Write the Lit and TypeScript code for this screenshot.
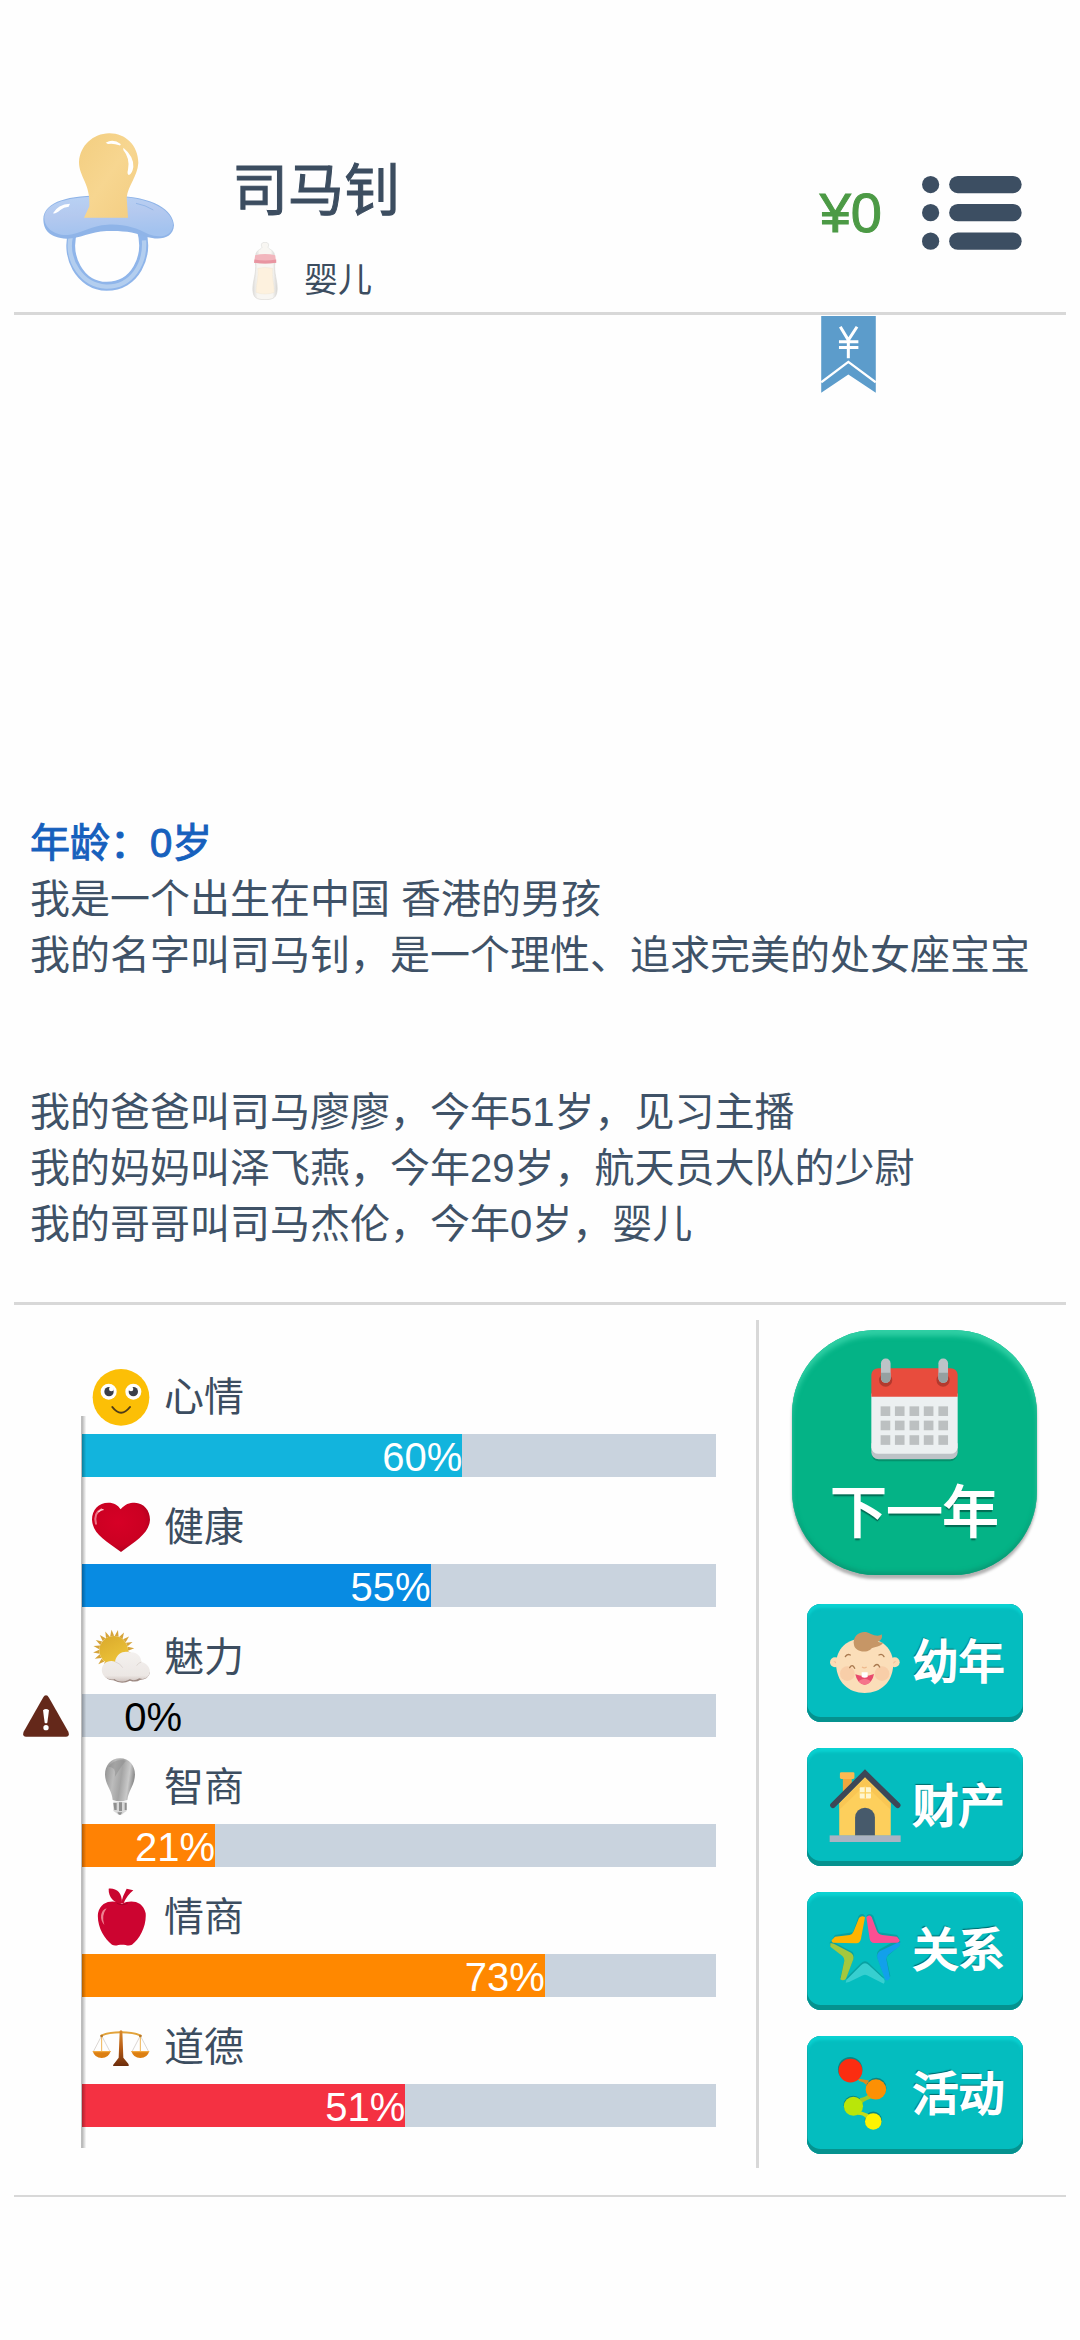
import { LitElement, html, svg, css, type TemplateResult } from "lit";
import { customElement, property } from "lit/decorators.js";
import { classMap } from "lit/directives/class-map.js";
import { styleMap } from "lit/directives/style-map.js";

interface Stat {
  id: string;
  label: string;
  value: number;
  color: string;
  box: string;
  art: unknown;
}

interface Action {
  label: string;
  box: string;
  art: unknown;
}

const pacifier = svg`
  <defs>
    <linearGradient id="shield" x1="0" y1="0" x2="0.2" y2="1">
      <stop offset="0" stop-color="#b9d2f4"></stop>
      <stop offset="0.5" stop-color="#b4c9ef"></stop>
      <stop offset="1" stop-color="#a3c3ef"></stop>
    </linearGradient>
    <linearGradient id="teat" x1="0" y1="0" x2="1" y2="1">
      <stop offset="0" stop-color="#f3ce80"></stop>
      <stop offset="0.5" stop-color="#f7d690"></stop>
      <stop offset="1" stop-color="#f3cd82"></stop>
    </linearGradient>
  </defs>
  <path fill="none" stroke="#8fb5ea" stroke-width="27" d="M222 352C190 440 242 527 320 528C405 528 448 440 424 358"></path>
  <path fill="none" stroke="#b3ceef" stroke-width="13" d="M212 380C198 450 245 525 318 529C395 531 437 460 432 390"></path>
  <path fill="#8fb4e8" d="M130 326C132 280 190 252 325 256C460 254 520 300 522 345C520 385 480 390 440 380C410 366 370 360 320 362C270 364 240 385 200 385C150 382 130 360 130 326Z"></path>
  <path fill="url(#shield)" d="M133 320C138 278 200 258 325 258C455 258 512 300 519 340C519 380 478 384 446 372C410 352 370 340 322 343C275 345 240 370 204 374C160 376 132 350 133 320Z"></path>
  <path fill="none" stroke="#94b7e8" stroke-width="3" d="M408 279Q436 284 460 299"></path>
  <path fill="url(#teat)" d="M327 69C375 68 415 105 415 158C412 200 384 225 380 262L384 322L252 322L268 288C272 220 237 200 237 155C240 105 280 70 327 69Z"></path>
  <path fill="#fff" d="M317 97Q340 84 362 101Q363 106 358 105Q340 98 324 101ZM370 112Q402 138 400 170Q397 190 387 194Q380 191 384 178Q391 145 370 119Z"></path>
  <path fill="#fff" d="M210 280Q173 282 159 309Q168 311 181 299Q191 290 206 289Z"></path>`;

const bottle = svg`
  <defs>
    <linearGradient id="glass" x1="0" x2="1" y1="0" y2="0">
      <stop offset="0" stop-color="#dedddb"></stop>
      <stop offset="0.2" stop-color="#f8f6f2"></stop>
      <stop offset="0.8" stop-color="#f8f6f2"></stop>
      <stop offset="1" stop-color="#d8d7d5"></stop>
    </linearGradient>
  </defs>
  <path fill="url(#glass)" stroke="#deddda" stroke-width="2" d="M764 434C764 416 778 417 783 408C778 398 783 393 792 393C801 393 806 398 801 408C807 417 820 416 821 434Z"></path>
  <path fill="url(#glass)" stroke="#dbd9d6" stroke-width="2" d="M763 455H822C818 485 830 510 829 535C828 560 818 567 792 567C764 567 756 560 755 535C755 510 767 485 763 455Z"></path>
  <path fill="#fdf1de" stroke="#eadfce" stroke-width="1" d="M770 472Q792 466 815 472C812 500 820 515 820 545Q792 555 765 545C765 515 773 500 770 472Z"></path>
  <path fill="#f2b6bd" d="M762 432Q792 425 823 432L826 455Q792 460 759 455Z"></path>
  <path fill="#e895a1" d="M760 445Q792 452 826 445L826 455Q792 460 759 455Z"></path>`;

const menuGlyph = svg`
  ${[131, 216, 302].map(
    (y) => svg`<circle cx="451" cy=${y} r="26"></circle><rect x="507" y=${y - 26} width="219" height="52" rx="26"></rect>`
  )}`;

const warning = svg`
  <path fill="#64281a" d="M138 252Q143 252 147 259L205 361Q210 376 198 376H78Q66 376 71 361L129 259Q133 252 138 252Z"></path>
  <path fill="#fff" d="M129 297Q138 289 147 297L142 334Q138 338 134 334Z"></path>
  <circle cx="138" cy="349" r="8" fill="#fff"></circle>`;

const smile = svg`
  <circle cx="363" cy="323" r="85" fill="#fcbf06"></circle>
  <circle cx="326" cy="306" r="24" fill="#fff"></circle>
  <circle cx="400" cy="306" r="24" fill="#fff"></circle>
  <circle cx="327" cy="306" r="14" fill="#3b3f4a"></circle>
  <circle cx="400" cy="306" r="14" fill="#3b3f4a"></circle>
  <circle cx="334" cy="298" r="7" fill="#fff"></circle>
  <circle cx="393" cy="298" r="7" fill="#fff"></circle>
  <path fill="none" stroke="#4e3b18" stroke-width="6" stroke-linecap="round" d="M337 352Q363 386 390 352"></path>`;

const heart = svg`
  <defs>
    <radialGradient id="heartFill" cx="0.45" cy="0.4" r="0.65">
      <stop offset="0" stop-color="#d60026"></stop>
      <stop offset="0.7" stop-color="#cb0022"></stop>
      <stop offset="1" stop-color="#a8001d"></stop>
    </radialGradient>
  </defs>
  <path fill="url(#heartFill)" d="M362 659C375 643 388 639 404 639C432 640 450 662 450 690C448 730 410 752 363 787C315 752 278 732 276 690C276 660 296 639 325 639C342 639 354 646 362 659Z"></path>
  <path fill="none" stroke="#ee7386" stroke-width="6" stroke-linecap="round" d="M288 702C283 682 288 666 304 659"></path>
  <path fill="none" stroke="#fbd3d8" stroke-width="4" stroke-linecap="round" d="M296 666Q302 660 309 660"></path>`;

const rays = Array.from({ length: 20 }, (_, i) => i * 18 - 6);
const sunCloud = svg`
  <defs>
    <linearGradient id="sunFill" x1="0" y1="0" x2="0.5" y2="1">
      <stop offset="0" stop-color="#d9a92c"></stop>
      <stop offset="1" stop-color="#edc338"></stop>
    </linearGradient>
    <linearGradient id="cloudFill" x1="0" y1="0" x2="0" y2="1">
      <stop offset="0" stop-color="#f4f1ef"></stop>
      <stop offset="0.8" stop-color="#ece7e4"></stop>
      <stop offset="1" stop-color="#cfc3be"></stop>
    </linearGradient>
  </defs>
  ${rays.map((a) => svg`<path fill="#d6a43a" d="M335 75L341 56L347 75Z" transform="rotate(${a} 341 118)"></path>`)}
  <circle cx="341" cy="118" r="43" fill="url(#sunFill)"></circle>
  <path fill="#9d8a83" d="M310 188Q320 208 340 208Q366 222 390 209Q408 215 420 207Q446 206 450 184Z"></path>
  <path fill="url(#cloudFill)" d="M330 205C308 200 300 180 309 163C318 150 334 148 345 152C350 124 374 118 390 124C410 122 424 136 424 153C442 156 454 174 448 190C442 204 430 206 418 202C405 210 395 208 390 204C370 216 350 212 344 204Q337 207 330 205Z"></path>
  <path fill="none" stroke="#ddd6d2" stroke-width="3" d="M345 152Q362 158 368 170M424 153Q414 156 410 164"></path>`;

const bulb = svg`
  <defs>
    <linearGradient id="bulbFill" x1="0" x2="1" y1="0" y2="0.2">
      <stop offset="0" stop-color="#8d8d8d"></stop>
      <stop offset="0.35" stop-color="#bcbcbc"></stop>
      <stop offset="0.6" stop-color="#a4a4a4"></stop>
      <stop offset="0.85" stop-color="#c9c9c9"></stop>
      <stop offset="1" stop-color="#919191"></stop>
    </linearGradient>
  </defs>
  <path fill="url(#bulbFill)" d="M360 445C388 445 405 467 405 494C404 525 386 540 382 570Q360 578 338 570C336 540 316 525 315 494C315 467 332 445 360 445Z"></path>
  <path fill="#8c8c8c" opacity="0.5" d="M325 470Q345 444 378 452Q362 470 345 500Q350 470 325 470Z"></path>
  <path fill="#d8d8d8" d="M340 575H380V603L372 608Q360 622 348 608L340 603Z"></path>
  <path fill="#8f8f8f" d="M340 579H350V600H343ZM357 577H366V603H357ZM374 579H380V600H374ZM352 607H367L362 614H357Z"></path>`;

const apple = svg`
  <path fill="#c90630" d="M366 97C345 99 325 82 326 54C350 52 366 66 366 97Z"></path>
  <path fill="#c90630" d="M363 98Q368 75 380 54L400 59Q380 75 371 98Z"></path>
  <path fill="#cc0430" d="M366 99C390 88 428 88 437 128C440 165 420 205 396 222C385 227 378 222 366 222C354 222 346 227 336 222C312 205 290 165 294 128C303 88 342 88 366 99Z"></path>
  <path fill="#ee8191" d="M320 113C300 118 298 148 313 163Q303 135 320 113Z"></path>
  <path fill="none" stroke="#a50327" stroke-width="3" d="M350 97Q366 107 384 97"></path>`;

const scales = svg`
  <defs>
    <linearGradient id="postFill" x1="0" x2="0" y1="0" y2="1">
      <stop offset="0" stop-color="#d98a2c"></stop>
      <stop offset="0.5" stop-color="#b85d16"></stop>
      <stop offset="1" stop-color="#6b2c0c"></stop>
    </linearGradient>
  </defs>
  <path fill="none" stroke="#c9c3bc" stroke-width="2" d="M304 492L281 536M306 492L329 536M420 492L397 536M422 492L445 536"></path>
  <path fill="none" stroke="#efb454" stroke-width="3" d="M305 492V536M421 492V536"></path>
  <path fill="none" stroke="#e2a33b" stroke-width="6" stroke-linecap="round" d="M304 490Q325 480 363 480Q401 480 422 490"></path>
  <circle cx="305" cy="491" r="4" fill="#b6772a"></circle>
  <circle cx="421" cy="491" r="4" fill="#b6772a"></circle>
  <path fill="url(#postFill)" d="M359 476Q363 472 367 476L370 556L383 572Q387 576 386 581H339Q339 576 344 572L356 556Z"></path>
  <path fill="#dc7f12" d="M278 536H332Q326 557 305 557Q284 557 278 536ZM394 536H448Q442 557 421 557Q400 557 394 536Z"></path>
  <path fill="#f3a93f" d="M278 536H332L331 540H279ZM394 536H448L447 540H395Z"></path>`;

const calendar = svg`
  <path fill="#067a5c" opacity="0.6" d="M396 480H652V494Q650 514 630 514H416Q396 512 396 494Z"></path>
  <path fill="#bdc3c7" d="M394 460H654V488Q652 508 632 508H416Q396 508 394 488Z"></path>
  <path fill="#ecf0f1" d="M394 310H654V472Q652 492 632 492H416Q396 492 394 472Z"></path>
  <path fill="#e84c3d" d="M394 320V254Q396 234 416 234H632Q652 234 654 254V320Z"></path>
  ${[437, 610].map(
    (x) => svg`
      <circle cx=${x} cy="270" r="20" fill="#b33a2e"></circle>
      <rect x=${x - 14} y="205" width="29" height="73" rx="14" fill="#bdc3c7"></rect>
      <path d="M${x - 14} 248H${x + 15}V264A14 14 0 0 1 ${x - 14} 264Z" fill="#95a0a1"></path>`
  )}
  ${[349, 392, 436].map((y) =>
    [422, 465, 509, 552, 596].map((x) => svg`<rect x=${x} y=${y} width="29" height="29" fill="#bcc0c1"></rect>`)
  )}`;

const baby = svg`
  <ellipse cx="251" cy="228" rx="86" ry="80" fill="#1d7f7d" opacity="0.5"></ellipse>
  <circle cx="162" cy="220" r="15" fill="#fadcb5"></circle>
  <circle cx="341" cy="220" r="15" fill="#fadcb5"></circle>
  <path fill="#f3bf98" d="M157 217Q166 214 168 226ZM346 217Q337 214 335 226Z"></path>
  <path fill="#fbdeb9" d="M251 148C305 148 336 180 337 226C335 280 300 312 251 312C202 312 167 280 165 226C166 180 197 148 251 148Z"></path>
  <circle cx="199" cy="254" r="22" fill="#f8c9a4" opacity="0.8"></circle>
  <circle cx="303" cy="254" r="22" fill="#f8c9a4" opacity="0.8"></circle>
  <path fill="#c69666" d="M219 168C212 138 245 120 268 134C282 141 296 142 302 136C306 148 298 156 290 158C304 162 308 160 306 162C294 178 272 172 268 182C250 194 222 186 219 168Z"></path>
  <path fill="none" stroke="#a9794f" stroke-width="4" stroke-linecap="round" d="M193 203Q198 193 208 198M294 198Q304 193 309 203M206 236Q214 223 221 238M279 232Q289 220 296 234"></path>
  <path fill="none" stroke="#eeb98d" stroke-width="4" d="M243 234Q250 239 257 234"></path>
  <path fill="#e8496c" d="M223 256Q251 266 279 255Q274 284 251 287Q228 284 223 256Z"></path>
  <path fill="#fff" d="M242 250H260V264Q251 269 242 264Z"></path>
  <path fill="#f5748b" d="M232 277Q251 262 270 277Q262 287 251 287Q240 287 232 277Z"></path>`;

const house = svg`
  <path fill="#eda73f" d="M185 566H212V600L185 612Z"></path>
  <rect x="176" y="549" width="44" height="20" rx="4" fill="#fbb952"></rect>
  <path fill="#fdcf5c" d="M174 642L252 560L330 642V741H174Z"></path>
  <path fill="#f5bd4c" d="M174 642L252 568L330 642V662L252 588L174 662Z" opacity="0.5"></path>
  <path fill="none" stroke="#3d4757" stroke-width="17" stroke-linecap="round" stroke-linejoin="miter" d="M155 649L252 552L351 649"></path>
  <rect x="236" y="594" width="34" height="34" rx="3" fill="#fff6cf"></rect>
  <path stroke="#fdcf5c" stroke-width="4" d="M253 594V628M236 611H270"></path>
  <path fill="#475a6b" d="M222 741V686A30 30 0 0 1 282 686V741Z"></path>
  <rect x="145" y="740" width="215" height="20" fill="#aab3c2"></rect>`;

const star = svg`
  <g fill="#0b8f8f" opacity="0.6" transform="translate(0 -4)">
    <path d="M154 184L162 171L216 163L233 114Q241 103 251 112L240 180Q238 190 228 192Z"></path>
    <path d="M356 184L348 171L294 163L277 114Q268 103 257 112L268 180Q270 190 280 192Z"></path>
    <path d="M146 194Q152 186 162 194L214 222Q220 228 218 240L196 298Q188 308 178 300L192 240L148 204Z"></path>
    <path d="M358 190Q350 184 340 190L296 214Q286 222 288 236L312 300Q322 308 328 294L316 238L356 202Z"></path>
    <path d="M192 304L240 256Q252 244 264 256L310 300L258 288H246Z"></path>
  </g>
  <path fill="#ffb400" d="M152 183L162 172L206 167Q215 165 218 156L234 116Q242 106 252 114L240 178Q238 190 226 192L156 190Q151 188 152 183Z"></path>
  <path fill="#fb4f92" d="M356 183L348 172L304 167Q292 165 288 156L272 113Q264 104 256 114L266 178Q268 190 280 191L350 190Q356 188 356 183Z"></path>
  <path fill="#a3c83e" d="M148 192Q156 190 164 196L210 220Q220 228 217 240L195 298Q187 306 178 300L190 244Q191 236 184 230L148 202Z"></path>
  <path fill="#12a0ea" d="M358 190Q350 188 342 194L296 216Q286 224 289 236L312 300Q320 308 327 296L316 240Q316 232 322 226L356 200Z"></path>
  <path fill="#37cfd0" d="M194 310Q196 300 204 294L240 258Q252 246 264 258L308 298Q314 306 308 313L258 288Q252 285 246 288L204 308Z"></path>`;

const nodes = svg`
  <g fill="#0a8583">
    <circle cx="207" cy="570" r="37"></circle>
    <circle cx="286" cy="627" r="31"></circle>
    <circle cx="216" cy="679" r="29"></circle>
    <circle cx="277" cy="724" r="26"></circle>
  </g>
  <path fill="#dd8a1c" d="M230 598Q246 601 264 604L256 618Q248 608 234 606Z"></path>
  <path fill="#9fc82a" d="M236 658Q256 654 264 644L278 658Q256 660 242 674Z"></path>
  <path fill="#c4dc1a" d="M234 696Q250 702 264 706L254 718Q246 708 230 708Z"></path>
  <circle cx="208" cy="574" r="36" fill="#fb2d11"></circle>
  <circle cx="285" cy="631" r="31" fill="#fd9004"></circle>
  <circle cx="217" cy="682" r="29" fill="#b9e609"></circle>
  <circle cx="277" cy="728" r="25" fill="#fdf302"></circle>`;

const STATS: Stat[] = [
  { id: "mood", label: "心情", value: 60, color: "#12b4dd", box: "276 235 174 174", art: smile },
  { id: "health", label: "健康", value: 55, color: "#088be2", box: "276 625 174 174", art: heart },
  { id: "charm", label: "魅力", value: 0, color: "#c9d3de", box: "276 51 174 174", art: sunCloud },
  { id: "iq", label: "智商", value: 21, color: "#ff8204", box: "276 444 174 174", art: bulb },
  { id: "eq", label: "情商", value: 73, color: "#ff8800", box: "276 52 174 174", art: apple },
  { id: "moral", label: "道德", value: 51, color: "#f43142", box: "276 437 174 174", art: scales },
];

const ACTIONS: Action[] = [
  { label: "幼年", box: "144 111 216 216", art: baby },
  { label: "财产", box: "144 542 216 218", art: house },
  { label: "关系", box: "144 104 216 216", art: star },
  { label: "活动", box: "144 536 216 218", art: nodes },
];

const BIRTH = ["我是一个出生在中国 香港的男孩", "我的名字叫司马钊，是一个理性、追求完美的处女座宝宝"];
const FAMILY = [
  "我的爸爸叫司马廖廖，今年51岁，见习主播",
  "我的妈妈叫泽飞燕，今年29岁，航天员大队的少尉",
  "我的哥哥叫司马杰伦，今年0岁，婴儿",
];

@customElement("stat-row")
export class StatRow extends LitElement {
  @property({ attribute: false }) stat!: Stat;

  static styles = css`
    :host {
      display: grid;
      grid-template-columns: 82px 1fr;
    }
    .head {
      grid-column: 2;
      display: flex;
      align-items: center;
      gap: 14px;
      padding: 21px 0 8px 10px;
      color: #3c4d60;
      font-size: 40px;
      line-height: 56px;
    }
    .icon {
      width: 58px;
      height: 58px;
    }
    .alert {
      display: flex;
      align-items: center;
      justify-content: center;
      padding-left: 10px;
    }
    .alert svg {
      width: 46px;
      height: 42px;
    }
    .track {
      grid-column: 2;
      background: #c9d3de;
    }
    .fill {
      min-width: 100px;
      box-sizing: border-box;
      padding-top: 3px;
      color: #fff;
      font-size: 40px;
      line-height: 40px;
      text-align: right;
    }
    .empty {
      color: #000;
    }
  `;

  render(): TemplateResult {
    const { id, label, value, color, box, art } = this.stat;
    const empty = value === 0;
    return html`
      <div class="head">
        <svg class="icon" viewBox=${box} aria-hidden="true">${art}</svg>
        <span id=${id}>${label}</span>
      </div>
      ${empty
        ? html`<div class="alert"><svg viewBox="69 251 138 126" aria-hidden="true">${warning}</svg></div>`
        : null}
      <div
        class="track"
        role="progressbar"
        aria-labelledby=${id}
        aria-valuemin="0"
        aria-valuemax="100"
        aria-valuenow=${value}
      >
        <div class=${classMap({ fill: true, empty })} style=${styleMap({ width: `${value}%`, background: color })}>
          ${value}%
        </div>
      </div>
    `;
  }
}

@customElement("app-root")
export class AppRoot extends LitElement {
  static styles = css`
    :host {
      display: flex;
      flex-direction: column;
      box-sizing: border-box;
      min-height: 100vh;
      padding: 0 14px 143px;
      background: #fefefe;
      color: #3f5267;
      font-family: "Liberation Sans", "Noto Sans CJK SC", sans-serif;
    }
    button {
      border: 0;
      padding: 0;
      background: none;
      font: inherit;
      color: inherit;
      cursor: pointer;
    }
    svg {
      display: block;
    }
    .header {
      display: flex;
      align-items: flex-start;
      padding: 133px 44px 12px 29px;
      border-bottom: 3px solid #d8d8d8;
    }
    .pacifier {
      width: 131px;
      height: 158px;
    }
    .who {
      flex: 1;
      padding: 22px 0 0 58px;
    }
    .name {
      margin: 0 0 15px;
      color: #3c4d60;
      font-size: 56px;
      line-height: 72px;
      font-weight: 400;
      -webkit-text-stroke: 1px currentColor;
    }
    .stage {
      display: flex;
      align-items: flex-end;
      gap: 26px;
      padding-left: 20px;
      color: #3c4d60;
      font-size: 34px;
      line-height: 40px;
    }
    .bottle {
      width: 26px;
      height: 58px;
    }
    .tools {
      display: flex;
      align-items: center;
      gap: 40px;
      height: 160px;
    }
    .money {
      color: #4c9a45;
      font-size: 56px;
      line-height: 64px;
      -webkit-text-stroke: 1px currentColor;
    }
    .menu svg {
      width: 100px;
      height: 76px;
      fill: #3c4e62;
    }
    .log {
      position: relative;
      flex: 1;
      display: flex;
      flex-direction: column;
      justify-content: flex-end;
      gap: 101px;
      padding: 0 16px 50px;
      border-bottom: 3px solid #d8d8d8;
      font-size: 40px;
      line-height: 56px;
    }
    .ribbon {
      position: absolute;
      top: 1px;
      right: 190px;
    }
    .ribbon svg {
      width: 55px;
      height: 77px;
    }
    .entry h2,
    .entry p {
      margin: 0;
    }
    .entry h2 {
      color: #1660bd;
      font-size: 40px;
      font-weight: 400;
      -webkit-text-stroke: 1px currentColor;
    }
    .panel {
      display: flex;
      padding: 15px 0 27px;
      border-bottom: 2px solid #d8d8d8;
    }
    .stats {
      position: relative;
      flex: 1;
      padding: 27px 40px 41px 0;
      margin-left: -14px;
      border-right: 3px solid #d8d8d8;
    }
    .axis {
      position: absolute;
      left: 81px;
      top: 96px;
      bottom: 20px;
      width: 5px;
      background: linear-gradient(to right, rgba(0, 0, 0, 0.26) 30%, rgba(0, 0, 0, 0.02));
    }
    .actions {
      display: flex;
      flex-direction: column;
      align-items: center;
      gap: 26px;
      padding: 10px 29px 0 33px;
    }
    .next {
      display: flex;
      flex-direction: column;
      align-items: center;
      width: 245px;
      height: 245px;
      margin-bottom: 3px;
      border-radius: 84px;
      padding-top: 28px;
      box-sizing: border-box;
      background: #04b386;
      box-shadow: inset 0 6px 5px #2fcfa4, inset 0 -3px 4px #099a75, 0 4px 3px rgba(0, 0, 0, 0.3);
      color: #fff;
      font-size: 56px;
      line-height: 72px;
      -webkit-text-stroke: 2px currentColor;
      text-shadow: 0 3px 1px rgba(0, 60, 50, 0.6);
    }
    .next svg {
      width: 87px;
      height: 104px;
      margin-bottom: 15px;
    }
    .action {
      display: flex;
      align-items: center;
      gap: 12px;
      width: 216px;
      height: 118px;
      padding: 0 0 2px 22px;
      border-radius: 14px;
      background: #04bdbf;
      box-shadow: inset 0 -5px 0 #05928f, inset 0 4px 3px #0ad2d2, inset 0 0 0 1px #0d9a9a;
      color: #fff;
      font-size: 46px;
      line-height: 60px;
      -webkit-text-stroke: 2px currentColor;
      text-shadow: -1px -2px 1px rgba(0, 70, 70, 0.7);
    }
    .action svg {
      width: 72px;
      height: 72px;
      overflow: visible;
    }
  `;

  render(): TemplateResult {
    return html`
      <header class="header">
        <svg class="pacifier" viewBox="129 68 393 474" aria-hidden="true">${pacifier}</svg>
        <div class="who">
          <h1 class="name">司马钊</h1>
          <div class="stage">
            <svg class="bottle" viewBox="753 392 78 176" aria-hidden="true">${bottle}</svg>
            <span>婴儿</span>
          </div>
        </div>
        <div class="tools">
          <span class="money">¥0</span>
          <button class="menu" aria-label="菜单"><svg viewBox="425 104 302 226">${menuGlyph}</svg></button>
        </div>
      </header>

      <main class="log">
        <button class="ribbon" aria-label="货币">
          <svg viewBox="124 528 163 230">
            <path fill="#5c9ccb" d="M124 528H287V757L205 703L124 757Z"></path>
            <path fill="none" stroke="#fff" stroke-width="7" d="M124 726L205 665L287 726"></path>
            <path fill="none" stroke="#fff" stroke-width="9" d="M181 560L205 600L231 560M205 598V654M177 605H235M177 622H235"></path>
          </svg>
        </button>
        <section class="entry">
          <h2>年龄：0岁</h2>
          ${BIRTH.map((line) => html`<p>${line}</p>`)}
        </section>
        <section class="entry">${FAMILY.map((line) => html`<p>${line}</p>`)}</section>
      </main>

      <div class="panel">
        <section class="stats">
          ${STATS.map((stat) => html`<stat-row .stat=${stat}></stat-row>`)}
          <div class="axis"></div>
        </section>
        <nav class="actions">
          <button class="next">
            <svg viewBox="393 204 262 312" aria-hidden="true">${calendar}</svg>
            下一年
          </button>
          ${ACTIONS.map(
            (a) => html`
              <button class="action">
                <svg viewBox=${a.box} aria-hidden="true">${a.art}</svg>
                ${a.label}
              </button>
            `
          )}
        </nav>
      </div>
    `;
  }
}
